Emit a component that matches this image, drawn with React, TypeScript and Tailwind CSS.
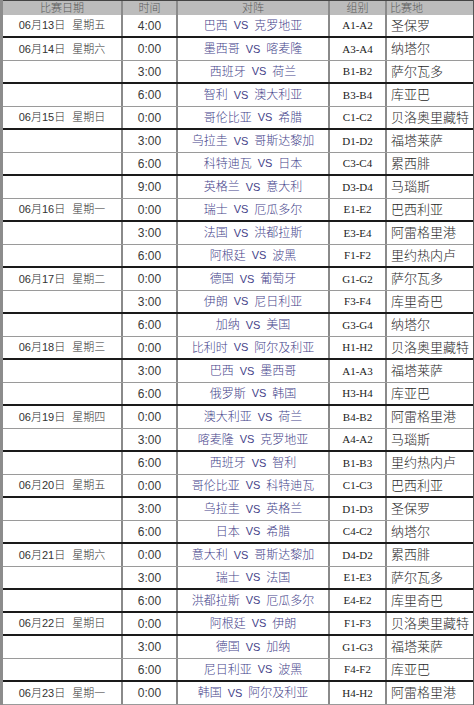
const rows: [string, string, string, string, string, string][] = [
  ["06月13日", "星期五", "4:00", "巴西|克罗地亚", "A1-A2", "圣保罗"],
  ["06月14日", "星期六", "0:00", "墨西哥|喀麦隆", "A3-A4", "纳塔尔"],
  ["", "", "3:00", "西班牙|荷兰", "B1-B2", "萨尔瓦多"],
  ["", "", "6:00", "智利|澳大利亚", "B3-B4", "库亚巴"],
  ["06月15日", "星期日", "0:00", "哥伦比亚|希腊", "C1-C2", "贝洛奥里藏特"],
  ["", "", "3:00", "乌拉圭|哥斯达黎加", "D1-D2", "福塔莱萨"],
  ["", "", "6:00", "科特迪瓦|日本", "C3-C4", "累西腓"],
  ["", "", "9:00", "英格兰|意大利", "D3-D4", "马瑙斯"],
  ["06月16日", "星期一", "0:00", "瑞士|厄瓜多尔", "E1-E2", "巴西利亚"],
  ["", "", "3:00", "法国|洪都拉斯", "E3-E4", "阿雷格里港"],
  ["", "", "6:00", "阿根廷|波黑", "F1-F2", "里约热内卢"],
  ["06月17日", "星期二", "0:00", "德国|葡萄牙", "G1-G2", "萨尔瓦多"],
  ["", "", "3:00", "伊朗|尼日利亚", "F3-F4", "库里奇巴"],
  ["", "", "6:00", "加纳|美国", "G3-G4", "纳塔尔"],
  ["06月18日", "星期三", "0:00", "比利时|阿尔及利亚", "H1-H2", "贝洛奥里藏特"],
  ["", "", "3:00", "巴西|墨西哥", "A1-A3", "福塔莱萨"],
  ["", "", "6:00", "俄罗斯|韩国", "H3-H4", "库亚巴"],
  ["06月19日", "星期四", "0:00", "澳大利亚|荷兰", "B4-B2", "阿雷格里港"],
  ["", "", "3:00", "喀麦隆|克罗地亚", "A4-A2", "马瑙斯"],
  ["", "", "6:00", "西班牙|智利", "B1-B3", "里约热内卢"],
  ["06月20日", "星期五", "0:00", "哥伦比亚|科特迪瓦", "C1-C3", "巴西利亚"],
  ["", "", "3:00", "乌拉圭|英格兰", "D1-D3", "圣保罗"],
  ["", "", "6:00", "日本|希腊", "C4-C2", "纳塔尔"],
  ["06月21日", "星期六", "0:00", "意大利|哥斯达黎加", "D4-D2", "累西腓"],
  ["", "", "3:00", "瑞士|法国", "E1-E3", "萨尔瓦多"],
  ["", "", "6:00", "洪都拉斯|厄瓜多尔", "E4-E2", "库里奇巴"],
  ["06月22日", "星期日", "0:00", "阿根廷|伊朗", "F1-F3", "贝洛奥里藏特"],
  ["", "", "3:00", "德国|加纳", "G1-G3", "福塔莱萨"],
  ["", "", "6:00", "尼日利亚|波黑", "F4-F2", "库亚巴"],
  ["06月23日", "星期一", "0:00", "韩国|阿尔及利亚", "H4-H2", "阿雷格里港"],
];

// scanned sheet: row rules alternate between heavy black and light gray
const heavy = new Set([0, 2, 4, 6, 8, 10, 12, 14, 16, 18, 20, 22, 24, 25, 26, 28]);

const cjk = { fontFamily: '"Liberation Serif", "Noto Sans CJK SC", serif' };
const sans = { fontFamily: '"Liberation Sans", "Noto Sans CJK SC", sans-serif' };

export default function App() {
  return (
    <div className="w-[474px] h-[705px] overflow-hidden bg-white border-l-[3px] border-r border-l-[#8c8c8c] border-r-[#555]">
      {/* header */}
      <div
        className="flex h-[15px] bg-[#bcbcbc] border-t border-[#444] text-[11px] leading-[14px] text-[#5a5a5a] font-light"
        style={cjk}
      >
        <div className="w-[120px] shrink-0 border-r-2 border-[#8a8a8a] text-center">比赛日期</div>
        <div className="w-[55px] shrink-0 border-r-2 border-[#8a8a8a] text-center">时间</div>
        <div className="w-[152px] shrink-0 border-r-2 border-[#8a8a8a] text-center">对阵</div>
        <div className="w-[57px] shrink-0 border-r-2 border-[#8a8a8a] text-center">组别</div>
        <div className="flex-1 pl-[3px]">比赛地</div>
      </div>

      {rows.map(([date, week, time, match, group, venue], i) => {
        const [a, b] = match.split("|");
        return (
          <div
            key={i}
            className={
              "flex h-[23px] items-center " +
              (heavy.has(i) ? "border-b-2 border-[#1a1a1a]" : "border-b border-[#9a9a9a]")
            }
          >
            <div
              className="w-[120px] h-full shrink-0 border-r-2 border-[#8a8a8a] flex items-center justify-center text-[11px] text-[#333] font-light"
              style={sans}
            >
              {date && (
                <span>
                  {date}
                  <span className="ml-[7px]">{week}</span>
                </span>
              )}
            </div>
            <div
              className="w-[55px] h-full shrink-0 border-r-2 border-[#8a8a8a] flex items-center justify-center text-[12px] text-[#3a3a3a]"
              style={sans}
            >
              {time}
            </div>
            <div
              className="w-[152px] h-full shrink-0 border-r-2 border-[#8a8a8a] flex items-center justify-center text-[12px] text-[#45438a] font-light"
              style={cjk}
            >
              <span>{a}</span>
              <span className="mx-[6px] text-[11px]" style={sans}>VS</span>
              <span>{b}</span>
            </div>
            <div
              className="w-[57px] h-full shrink-0 border-r-2 border-[#8a8a8a] flex items-center justify-center text-[11px] text-[#222]"
              style={{ fontFamily: '"Liberation Serif", serif' }}
            >
              {group}
            </div>
            <div
              className="flex-1 h-full flex items-center pl-[4px] text-[13px] text-[#2a2a2a] font-light whitespace-nowrap"
              style={cjk}
            >
              {venue}
            </div>
          </div>
        );
      })}
    </div>
  );
}
